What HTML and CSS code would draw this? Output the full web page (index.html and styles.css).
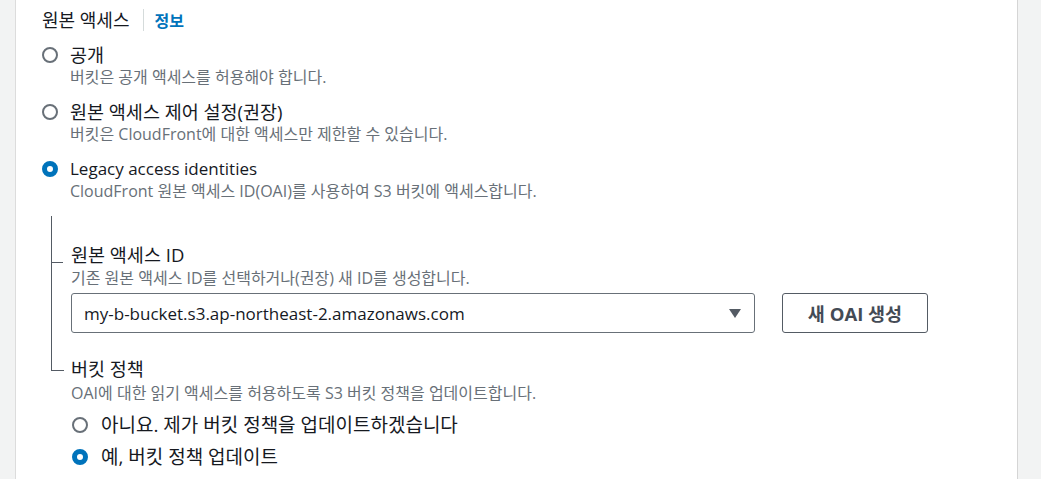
FILE: index.html
```html
<!DOCTYPE html>
<html lang="ko">
<head>
  <meta charset="UTF-8">
  <meta name="viewport" content="width=device-width, initial-scale=1.0">
  <title>원본 액세스</title>
  <link rel="stylesheet" href="styles.css">
</head>
<body>
  <div class="page">
    <div class="side side-left"></div>

    <main class="panel">
      <!-- Field header -->
      <div class="field-head">
        <span class="field-title">원본 액세스</span>
        <a class="info-link" href="#">정보</a>
      </div>

      <div class="radio-group">
        <label class="option">
          <span class="radio"></span>
          <span class="option-text">
            <span class="option-label">공개</span>
            <span class="option-desc">버킷은 공개 액세스를 허용해야 합니다.</span>
          </span>
        </label>

        <label class="option">
          <span class="radio"></span>
          <span class="option-text">
            <span class="option-label">원본 액세스 제어 설정(권장)</span>
            <span class="option-desc">버킷은 CloudFront에 대한 액세스만 제한할 수 있습니다.</span>
          </span>
        </label>

        <label class="option">
          <span class="radio checked"></span>
          <span class="option-text">
            <span class="option-label latin">Legacy access identities</span>
            <span class="option-desc">CloudFront 원본 액세스 ID(OAI)를 사용하여 S3 버킷에 액세스합니다.</span>
          </span>
        </label>
      </div>

      <!-- Nested settings for legacy OAI -->
      <div class="tree">
        <div class="tree-item first">
          <div class="sub-title">원본 액세스 ID</div>
          <div class="sub-desc">기존 원본 액세스 ID를 선택하거나(권장) 새 ID를 생성합니다.</div>
          <div class="select-row">
            <div class="select">
              <span>my-b-bucket.s3.ap-northeast-2.amazonaws.com</span>
              <span class="caret"></span>
            </div>
            <button class="btn">새 OAI 생성</button>
          </div>
        </div>

        <div class="tree-item last">
          <div class="sub-title">버킷 정책</div>
          <div class="sub-desc">OAI에 대한 읽기 액세스를 허용하도록 S3 버킷 정책을 업데이트합니다.</div>
          <label class="option small">
            <span class="radio"></span>
            <span class="option-label">아니요. 제가 버킷 정책을 업데이트하겠습니다</span>
          </label>
          <label class="option small">
            <span class="radio checked"></span>
            <span class="option-label">예, 버킷 정책 업데이트</span>
          </label>
        </div>
      </div>
    </main>

    <div class="side side-right"></div>
  </div>
</body>
</html>
```

FILE: styles.css
```css
body {
  margin: 0;
  font-family: 'Open Sans', 'Noto Sans CJK KR', sans-serif;
  color: #16191f;
  background: #fff;
}

.page {
  display: flex;
  height: 479px;
  overflow: hidden;
}

/* Grey gutters on both sides */
.side {
  background: #f2f3f3;
}
.side-left {
  width: 15px;
  border-right: 1px solid #dcdcdc;
}
.side-right {
  width: 23px;
  border-left: 1px solid #d5d5d5;
}

.panel {
  flex: 1;
  padding: 8px 0 0 26px;
}

/* Header: title | info */
.field-head {
  display: flex;
  align-items: center;
  height: 24px;
}
.field-title {
  font-size: 18px;
  line-height: 22px;
  padding-right: 14px;
  border-right: 1px solid #d5dbdb;
}
.info-link {
  color: #0073bb;
  font-size: 16px;
  font-weight: 700;
  text-decoration: none;
  padding-left: 10px;
}

/* Radio buttons */
.radio-group {
  display: flex;
  flex-direction: column;
  gap: 13px;
  margin-top: 11px;
}
.option {
  display: flex;
  align-items: flex-start;
  gap: 12px;
  cursor: pointer;
}
.radio {
  flex: none;
  width: 16px;
  height: 16px;
  box-sizing: border-box;
  border: 2px solid #687078;
  border-radius: 50%;
  margin-top: 4px;
  background: #fff;
}
.radio.checked {
  border: 5px solid #0073bb;
}
.option-text {
  display: flex;
  flex-direction: column;
}
.option-label {
  font-size: 18.5px;
  line-height: 24px;
}
.option-label.latin {
  font-size: 17px;
}
.option-desc {
  font-size: 16px;
  line-height: 20px;
  color: #687078;
}

/* Nested block with tree lines */
.tree {
  margin: 15px 0 0 9px;
  width: 900px;
}
.tree-item {
  position: relative;
  padding-left: 20px;
}
.tree-item::before {
  content: '';
  position: absolute;
  left: 0;
  top: 0;
  bottom: 0;
  border-left: 1px solid #545b64;
}
.tree-item.first {
  padding-top: 27px;
}
.tree-item.first::after {
  content: '';
  position: absolute;
  left: 0;
  top: 46px;
  width: 12px;
  border-top: 1px solid #545b64;
}
.tree-item.last {
  padding-top: 24px;
}
/* last item: the line turns into an L beside the title */
.tree-item.last::before {
  bottom: auto;
  height: 37px;
  width: 12px;
  border-bottom: 1px solid #545b64;
}

.sub-title {
  font-size: 18.5px;
  line-height: 24px;
}
.sub-desc {
  font-size: 16px;
  line-height: 22px;
  color: #687078;
}

.select-row {
  display: flex;
  gap: 27px;
  margin-top: 4px;
}
.select {
  width: 684px;
  height: 40px;
  box-sizing: border-box;
  border: 1px solid #687078;
  border-radius: 3px;
  display: flex;
  align-items: center;
  justify-content: space-between;
  padding: 0 13px 0 12px;
  font-size: 17px;
}
.caret {
  width: 0;
  height: 0;
  border-left: 6.5px solid transparent;
  border-right: 6.5px solid transparent;
  border-top: 9px solid #545b64;
}
.btn {
  width: 146px;
  height: 40px;
  background: #fff;
  border: 1px solid #545b64;
  border-radius: 3px;
  font-family: inherit;
  font-size: 18.5px;
  font-weight: 700;
  color: #444b55;
}

.tree-item.last .sub-desc {
  line-height: 24px;
}
.option.small {
  margin-top: 8px;
  gap: 13px;
  padding-left: 1px;
}
.option.small .option-label {
  font-size: 19px;
}
```
